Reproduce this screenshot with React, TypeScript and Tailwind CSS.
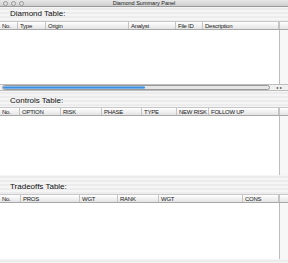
import React from 'react';

// Kolumny trzech tabel (szerokość, etykieta)
const diamondCols = [
    { w: 18, label: 'No.' },
    { w: 28, label: 'Type' },
    { w: 83, label: 'Origin' },
    { w: 47, label: 'Analyst' },
    { w: 27, label: 'File ID' },
    { w: 76, label: 'Description' },
];

const controlsCols = [
    { w: 20, label: 'No.' },
    { w: 41, label: 'OPTION' },
    { w: 41, label: 'RISK' },
    { w: 40, label: 'PHASE' },
    { w: 35, label: 'TYPE' },
    { w: 32, label: 'NEW RISK' },
    { w: 70, label: 'FOLLOW UP' },
];

const tradeoffsCols = [
    { w: 21, label: 'No.' },
    { w: 59, label: 'PROS' },
    { w: 38, label: 'WGT' },
    { w: 41, label: 'RANK' },
    { w: 84, label: 'WGT' },
    { w: 36, label: 'CONS' },
];

interface Col {
    w: number;
    label: string;
}

const HeaderRow: React.FC<{ cols: Col[] }> = ({ cols }) => (
    <div className="flex h-[9px] bg-gradient-to-b from-white to-[#e4e4e4] border-b border-[#a8a8a8] border-t border-t-[#c8c8c8]">
        {cols.map((c, i) => (
            <div
                key={i}
                style={{ width: c.w }}
                className="shrink-0 pl-[2px] text-[6px] leading-[8px] tracking-[-0.25px] text-[#222] border-r border-[#c4c4c4] whitespace-nowrap overflow-hidden"
            >
                {c.label}
            </div>
        ))}
        <div className="flex-1" />
        <div className="w-[9px] border-l border-[#c4c4c4]" />
    </div>
);

const TableBody: React.FC<{ h: string }> = ({ h }) => (
    <div className={`flex ${h} bg-white`}>
        <div className="flex-1" />
        <div className="w-[9px] border-l border-[#bdbdbd] bg-[#f7f7f7]" />
    </div>
);

const SectionLabel: React.FC<{ text: string; h: string; pt: string }> = ({ text, h, pt }) => (
    <div className={`${h} ${pt} pl-[10px] text-[8px] leading-[10px] text-[#111]`}>{text}</div>
);

const App: React.FC = () => {
    return (
        <div
            className="w-[288px] h-[263px] flex flex-col overflow-hidden bg-[repeating-linear-gradient(to_bottom,#ececec_0px,#ececec_2px,#f5f5f5_2px,#f5f5f5_4px)]"
            style={{ fontFamily: '"Liberation Sans", Arial, sans-serif' }}
        >
            {/* Okno - pasek tytułu */}
            <div className="relative h-[7px] bg-gradient-to-b from-[#e8e8e8] to-[#cfcfcf] border-b border-[#9a9a9a] flex items-center">
                <div className="flex gap-[3px] pl-[3px]">
                    <span className="w-[5px] h-[5px] rounded-full border border-[#999] bg-[#ddd]" />
                    <span className="w-[5px] h-[5px] rounded-full border border-[#999] bg-[#ddd]" />
                    <span className="w-[5px] h-[5px] rounded-full border border-[#999] bg-[#ddd]" />
                </div>
                <div className="absolute inset-0 text-center text-[5.5px] leading-[7px] text-[#222]">Diamond Summary Panel</div>
            </div>

            <SectionLabel text="Diamond Table:" h="h-[14px]" pt="pt-[2px]" />
            <HeaderRow cols={diamondCols} />
            <TableBody h="h-[54px]" />

            {/* Poziomy pasek przewijania */}
            <div className="flex items-center h-[7px] bg-[#f0f0f0] border-y border-[#bdbdbd] pl-[2px]">
                <div className="flex-1 h-[5px] rounded-full border border-[#9a9a9a] bg-[#e6e6e6] overflow-hidden">
                    <div className="w-[142px] h-full rounded-full bg-gradient-to-b from-[#9cc9f2] via-[#3b8ee0] to-[#8cc2f0]" />
                </div>
                <div className="w-[18px] flex justify-center gap-[2px] text-[4px] leading-[5px] text-[#333]">
                    <span>◂</span>
                    <span>▸</span>
                </div>
            </div>

            <SectionLabel text="Controls Table:" h="h-[16px]" pt="pt-[5px]" />
            <HeaderRow cols={controlsCols} />
            <TableBody h="h-[59px]" />

            <SectionLabel text="Tradeoffs Table:" h="h-[19px]" pt="pt-[7px]" />
            <HeaderRow cols={tradeoffsCols} />
            <TableBody h="flex-1" />
            <div className="h-[4px]" />
        </div>
    );
};

export default App;
